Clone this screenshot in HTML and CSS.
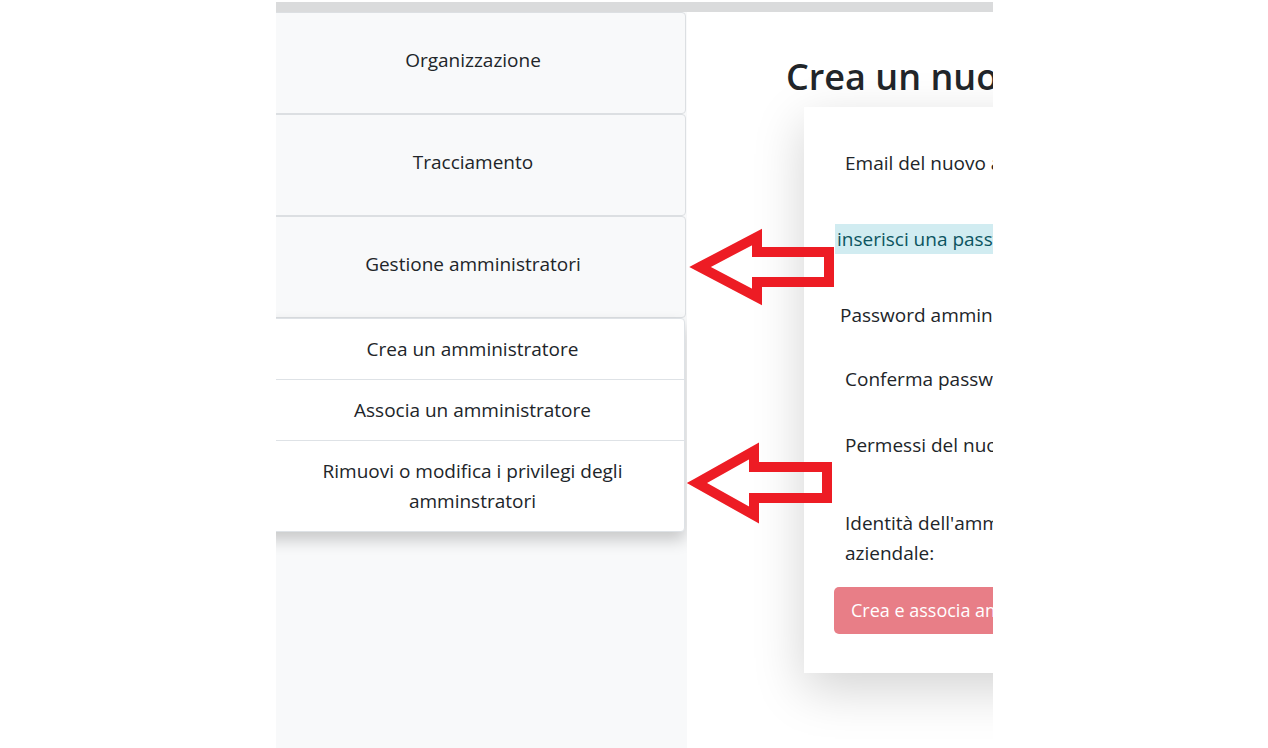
FILE: index.html
```html
<!DOCTYPE html>
<html lang="it">
<head>
<meta charset="utf-8">
<title>Gestione amministratori</title>
<link rel="stylesheet" href="styles.css">
</head>
<body>
<div class="frame">
  <div class="topbar"></div>
  <div class="layout">
    <aside class="sidebar">
      <div class="side-card">Organizzazione</div>
      <div class="side-card">Tracciamento</div>
      <div class="side-card">Gestione amministratori</div>
      <div class="submenu">
        <div class="sub-item">Crea un amministratore</div>
        <div class="sub-item">Associa un amministratore</div>
        <div class="sub-item">Rimuovi o modifica i privilegi degli amminstratori</div>
      </div>
    </aside>
    <main class="main">
      <h2 class="title">Crea un nuovo amministratore</h2>
      <div class="form-card">
        <div class="row row-email">Email del nuovo amministratore:</div>
        <div class="alert">inserisci una password per l'amministratore</div>
        <div class="row row-pass">Password amministratore:</div>
        <div class="row row-conf">Conferma password:</div>
        <div class="row row-perm">Permessi del nuovo amministratore:</div>
        <div class="row row-id">Identità dell'amministratore nel sistema<br>aziendale:</div>
        <button class="btn" disabled>Crea e associa amministratore</button>
      </div>
    </main>
  </div>
</div>
<svg class="arrows" width="1268" height="748" viewBox="0 0 1268 748">
  <polygon points="700,267 757,237 757,252 829,252 829,282 757,282 757,297" />
  <polygon points="697,483 754,451 754,467 827,467 827,498 754,498 754,515" />
</svg>
</body>
</html>
```
FILE: styles.css
```css
* { box-sizing: border-box; }
html, body { margin: 0; padding: 0; background: #fff; }
body {
  font-family: "Open Sans", "Noto Sans", sans-serif;
  font-size: 19px;
  line-height: 30px;
  color: #212529;
  width: 1268px;
  height: 748px;
  position: relative;
  overflow: hidden;
}
.frame {
  margin-left: 276px;
  width: 717px;
  height: 748px;
  overflow: hidden;
  padding-top: 2px;
  display: flex;
  flex-direction: column;
}
.topbar {
  height: 10px;
  background: #dadbdc;
  flex: none;
}
.layout {
  flex: 1;
  display: flex;
}
.sidebar {
  width: 411px;
  flex: none;
  background: #f8f9fa;
  padding-right: 1px;
}
.side-card {
  margin-left: -16px;
  height: 102px;
  padding-bottom: 6px;
  border: 1px solid #dcdfe2;
  border-radius: 4px;
  background: #f8f9fa;
  display: flex;
  align-items: center;
  justify-content: center;
  text-align: center;
}
.submenu {
  margin-left: -16px;
  margin-right: 1px;
  background: #fff;
  border: 1px solid #dee2e6;
  border-radius: 4px;
  box-shadow: 0 8px 16px rgba(0,0,0,.2);
}
.sub-item {
  text-align: center;
  padding: 15px 36px;
  border-bottom: 1px solid #dee2e6;
}
.sub-item:last-child { border-bottom: none; }
.main {
  flex: 1;
  position: relative;
  background: #fff;
  overflow: hidden;
}
.title {
  margin: 43px 0 0 99px;
  font-size: 36px;
  font-weight: 600;
  line-height: 44px;
  white-space: nowrap;
}
.form-card {
  margin: 8px 0 40px 117px;
  width: 600px;
  background: #fff;
  padding: 41px 30px 39px 30px;
  box-shadow: 0 16px 48px rgba(0,0,0,.175);
}
.row {
  white-space: nowrap;
  padding-left: 11px;
}
.row-email { margin-bottom: 46px; }
.alert {
  background: #d1ecf1;
  color: #0c5460;
  padding-left: 2px;
  white-space: nowrap;
  margin-left: 1px;
}
.row-pass { margin-top: 46px; padding-left: 6px; }
.row-conf { margin-top: 34px; }
.row-perm { margin-top: 36px; }
.row-id { margin-top: 48px; }
.btn {
  margin-top: 19px;
  display: block;
  font-family: inherit;
  font-size: 18px;
  line-height: 27px;
  padding: 10px 17px;
  color: #fff;
  background: #e87e87;
  border: none;
  border-radius: 5px;
  white-space: nowrap;
}
.arrows {
  position: absolute;
  left: 0;
  top: 0;
  pointer-events: none;
}
.arrows polygon {
  fill: none;
  stroke: #ed1c24;
  stroke-width: 10;
  stroke-linejoin: miter;
}
```
